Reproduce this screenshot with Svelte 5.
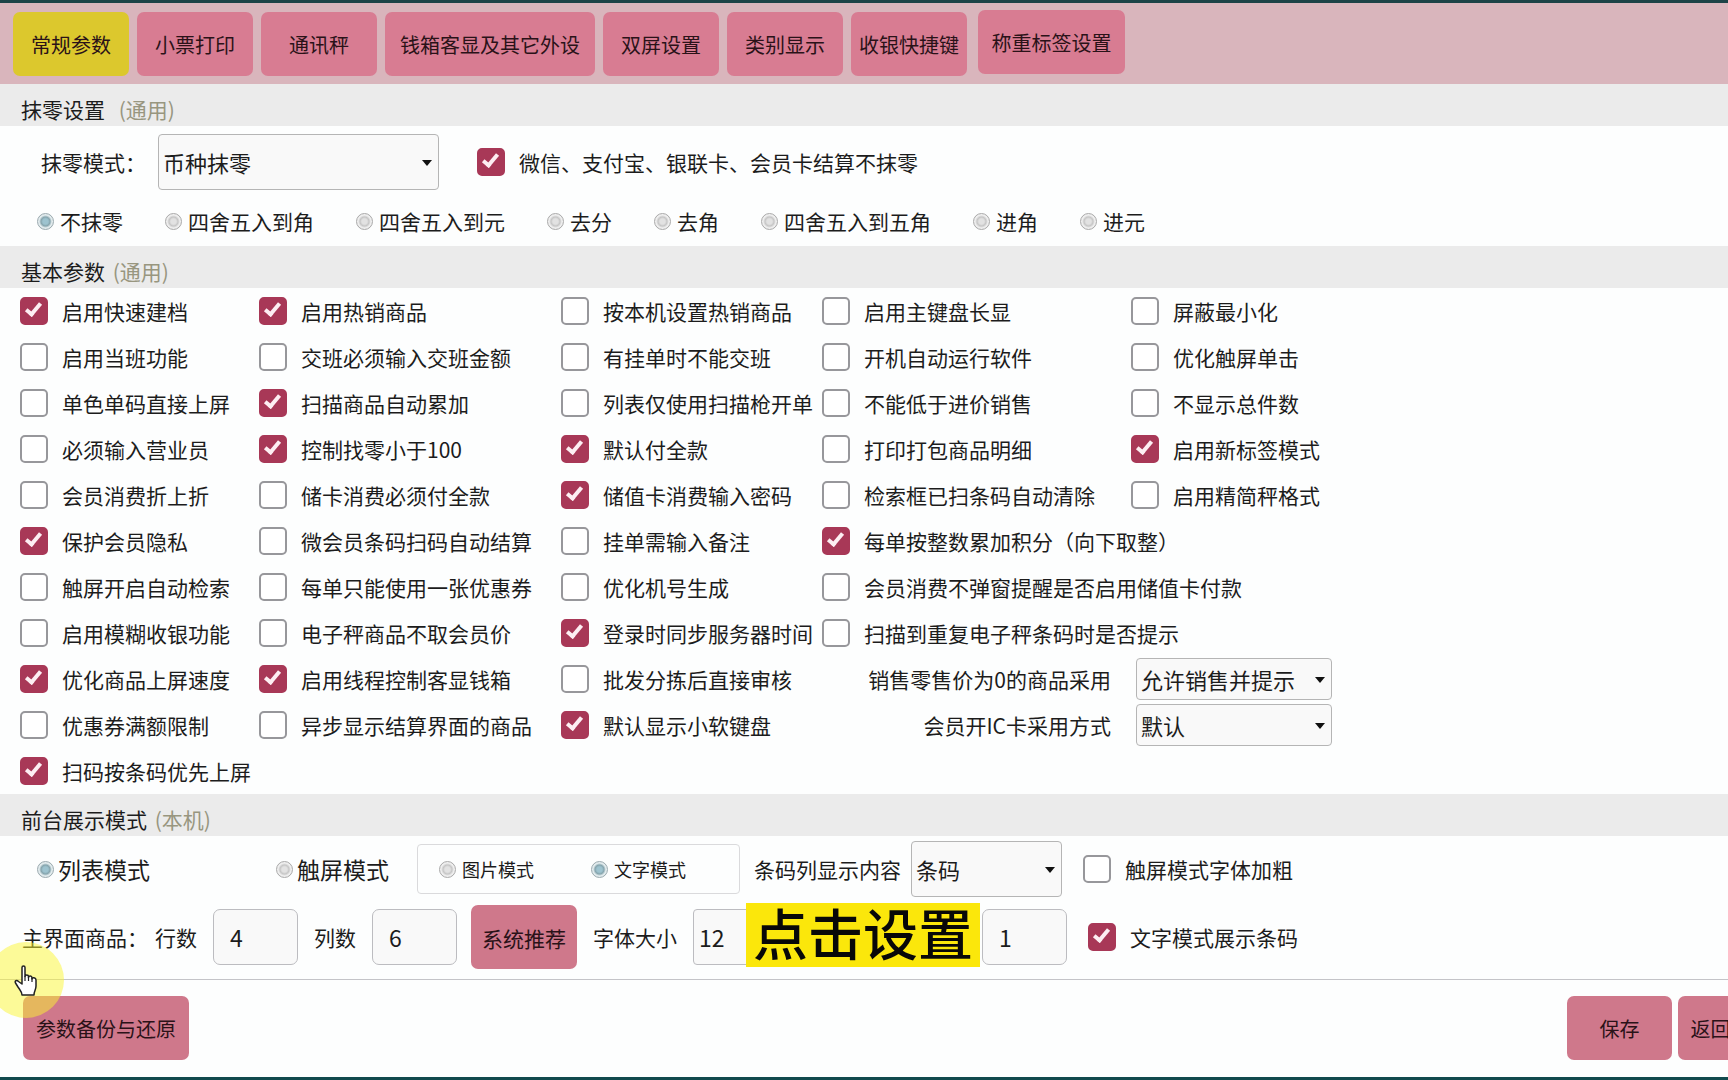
<script lang="ts">
    interface Option {
        label: string;
        on?: boolean;
        wide?: boolean;
    }

    const tabs = ['常规参数', '小票打印', '通讯秤', '钱箱客显及其它外设', '双屏设置', '类别显示', '收银快捷键', '称重标签设置'];
    let activeTab = $state('常规参数');

    const roundingModes = ['不抹零', '四舍五入到角', '四舍五入到元', '去分', '去角', '四舍五入到五角', '进角', '进元'];
    let rounding = $state('不抹零');
    let skipRounding = $state(true);

    // One inner array per line of the grid, wide options run over the last two columns
    const rows: Option[][] = $state([
        [
            { label: '启用快速建档', on: true },
            { label: '启用热销商品', on: true },
            { label: '按本机设置热销商品' },
            { label: '启用主键盘长显' },
            { label: '屏蔽最小化' }
        ],
        [
            { label: '启用当班功能' },
            { label: '交班必须输入交班金额' },
            { label: '有挂单时不能交班' },
            { label: '开机自动运行软件' },
            { label: '优化触屏单击' }
        ],
        [
            { label: '单色单码直接上屏' },
            { label: '扫描商品自动累加', on: true },
            { label: '列表仅使用扫描枪开单' },
            { label: '不能低于进价销售' },
            { label: '不显示总件数' }
        ],
        [
            { label: '必须输入营业员' },
            { label: '控制找零小于100', on: true },
            { label: '默认付全款', on: true },
            { label: '打印打包商品明细' },
            { label: '启用新标签模式', on: true }
        ],
        [
            { label: '会员消费折上折' },
            { label: '储卡消费必须付全款' },
            { label: '储值卡消费输入密码', on: true },
            { label: '检索框已扫条码自动清除' },
            { label: '启用精简秤格式' }
        ],
        [
            { label: '保护会员隐私', on: true },
            { label: '微会员条码扫码自动结算' },
            { label: '挂单需输入备注' },
            { label: '每单按整数累加积分（向下取整）', on: true, wide: true }
        ],
        [
            { label: '触屏开启自动检索' },
            { label: '每单只能使用一张优惠券' },
            { label: '优化机号生成' },
            { label: '会员消费不弹窗提醒是否启用储值卡付款', wide: true }
        ],
        [
            { label: '启用模糊收银功能' },
            { label: '电子秤商品不取会员价' },
            { label: '登录时同步服务器时间', on: true },
            { label: '扫描到重复电子秤条码时是否提示', wide: true }
        ],
        [
            { label: '优化商品上屏速度', on: true },
            { label: '启用线程控制客显钱箱', on: true },
            { label: '批发分拣后直接审核' }
        ],
        [
            { label: '优惠券满额限制' },
            { label: '异步显示结算界面的商品' },
            { label: '默认显示小软键盘', on: true }
        ],
        [{ label: '扫码按条码优先上屏', on: true }]
    ]);

    // Drop-downs that close the lines without a fourth option
    const selects: Record<number, { id: string; label: string; value: string }> = {
        8: { id: 'zero-price', label: '销售零售价为0的商品采用', value: '允许销售并提示' },
        9: { id: 'ic-card', label: '会员开IC卡采用方式', value: '默认' }
    };

    let displayMode = $state('列表模式');
    let touchMode = $state('文字模式');
    let boldTouch = $state(false);
    let showBarcode = $state(true);
    let rowCount = $state('4');
    let colCount = $state('6');
    let fontSize = $state('12');
    let extra = $state('1');
</script>

<div class="window">
    <nav class="tabs">
        {#each tabs as tab}
            <button type="button" class="btn tab" class:active={tab === activeTab} onclick={() => (activeTab = tab)}>{tab}</button>
        {/each}
    </nav>

    <main>
        <section>
            <h2 class="spaced">抹零设置 <span>(通用)</span></h2>
            <div class="line mode-line">
                <label for="mode">抹零模式：</label>
                <div class="select mode-select">
                    <select id="mode"><option>币种抹零</option></select>
                </div>
                <label class="check">
                    <input type="checkbox" bind:checked={skipRounding} />
                    微信、支付宝、银联卡、会员卡结算不抹零
                </label>
            </div>
            <div class="line rounding-line">
                {#each roundingModes as mode}
                    <label class="radio">
                        <input type="radio" name="rounding" value={mode} bind:group={rounding} />
                        {mode}
                    </label>
                {/each}
            </div>
        </section>

        <section>
            <h2>基本参数 <span>(通用)</span></h2>
            {#each rows as row, i}
                <div class="grid-line">
                    {#each row as option}
                        <label class="check" class:wide={option.wide}>
                            <input type="checkbox" bind:checked={option.on} />
                            {option.label}
                        </label>
                    {/each}
                    {#if selects[i]}
                        <label class="select-label" for={selects[i].id}>{selects[i].label}</label>
                        <div class="select grid-select">
                            <select id={selects[i].id}><option>{selects[i].value}</option></select>
                        </div>
                    {/if}
                </div>
            {/each}
        </section>

        <section>
            <h2>前台展示模式 <span>(本机)</span></h2>
            <div class="line display-line">
                <label class="radio large list-mode">
                    <input type="radio" name="display" value="列表模式" bind:group={displayMode} />
                    列表模式
                </label>
                <label class="radio large">
                    <input type="radio" name="display" value="触屏模式" bind:group={displayMode} />
                    触屏模式
                </label>
                <div class="group">
                    <label class="radio small">
                        <input type="radio" name="touch" value="图片模式" bind:group={touchMode} />
                        图片模式
                    </label>
                    <label class="radio small">
                        <input type="radio" name="touch" value="文字模式" bind:group={touchMode} />
                        文字模式
                    </label>
                </div>
                <label for="barcode">条码列显示内容</label>
                <div class="select barcode-select">
                    <select id="barcode"><option>条码</option></select>
                </div>
                <label class="check">
                    <input type="checkbox" bind:checked={boldTouch} />
                    触屏模式字体加粗
                </label>
            </div>
            <div class="line size-line">
                <span class="lead">主界面商品：</span>
                <label for="rows">行数</label>
                <input id="rows" class="field" type="text" bind:value={rowCount} />
                <label for="cols">列数</label>
                <input id="cols" class="field" type="text" bind:value={colCount} />
                <button type="button" class="btn recommend">系统推荐</button>
                <label for="font-size">字体大小</label>
                <div class="captioned">
                    <input id="font-size" class="field tight" type="text" bind:value={fontSize} />
                    <div class="caption">点击设置</div>
                </div>
                <input class="field" type="text" aria-label="数量" bind:value={extra} />
                <label class="check barcode-check">
                    <input type="checkbox" bind:checked={showBarcode} />
                    文字模式展示条码
                </label>
            </div>
        </section>
    </main>

    <footer>
        <button type="button" class="btn backup">参数备份与还原</button>
        <button type="button" class="btn save">保存</button>
        <button type="button" class="btn back">返回</button>
        <div class="pointer">
            <svg width="26" height="32" viewBox="0 0 26 32">
                <path
                    d="M8 2.500c0-2 3-2 3 0v9c0-2 3.500-2 3.500 0v1c0-2 3.500-2 3.500.5v1c0-2 4-1.500 4 1v6c0 4-2 5-2 9H8c0-3-2-5-4-8l-2.500-4c-1-2 1-3.500 3-1.500L8 19z"
                    fill="#fff"
                    stroke="#222"
                    stroke-width="1.500"
                    stroke-linejoin="round"
                />
                <path d="M11 11v5M14.500 12v4M18 13v4" stroke="#222" stroke-width="1.200" />
            </svg>
        </div>
    </footer>
</div>

<style>
    :global(body) {
        margin: 0;
        background: #fdfefe;
    }

    .window {
        box-sizing: border-box;
        display: flex;
        flex-direction: column;
        min-height: 100vh;
        border-top: 3px solid #1d4347;
        border-bottom: 3px solid #114a4d;
        overflow: hidden;
        color: #1c1c1c;
        font-family: "Noto Sans CJK SC", sans-serif;
        font-size: 21px;
        line-height: 28px;
        white-space: nowrap;
    }

    main {
        flex: 1;
        padding-bottom: 7px;
    }

    input,
    select,
    button {
        box-sizing: border-box;
        margin: 0;
        color: inherit;
        font: inherit;
    }

    .btn {
        height: 64px;
        padding: 2px 0 0;
        border: none;
        border-radius: 7px;
        background: #cf788b;
        color: #2a1218;
        font-size: 20px;
        cursor: pointer;
    }

    .tabs {
        display: flex;
        gap: 8px;
        padding: 9px 13px 8px;
        background: #d9b5bc;
    }

    .tab {
        min-width: 116px;
        padding: 2px 8px 0;
        background: #d87c92;
    }

    .tab:nth-child(4) {
        min-width: 210px;
    }

    .tab:last-child {
        min-width: 147px;
        margin: -2px 0 2px 3px;
    }

    .tab.active {
        background: #dcc82d;
    }

    h2 {
        box-sizing: border-box;
        height: 42px;
        margin: 0;
        padding: 11px 21px 3px;
        background: #ebebeb;
        font-size: 21px;
        font-weight: 400;
    }

    h2 span {
        margin-left: 3px;
        color: #98967f;
    }

    h2.spaced span {
        margin-left: 9px;
    }

    .line {
        box-sizing: border-box;
        display: flex;
        align-items: center;
    }

    .check {
        display: flex;
        align-items: center;
        gap: 14px;
    }

    .check input {
        flex: none;
        width: 28px;
        height: 28px;
        appearance: none;
        border: 2px solid #97979b;
        border-radius: 5px;
        background: #fff;
    }

    .check input:checked {
        border-color: #a83857;
        background: #a83857;
    }

    .check input:checked::before {
        content: "";
        display: block;
        width: 5px;
        height: 12px;
        margin: 1px 0 0 7px;
        border: solid #fdeef2;
        border-width: 0 4px 4px 0;
        transform: rotate(40deg);
    }

    .radio {
        display: flex;
        align-items: center;
        gap: 6px;
    }

    .radio input {
        flex: none;
        width: 17px;
        height: 17px;
        appearance: none;
        border: 1px solid #a9a9a9;
        border-radius: 50%;
        background: radial-gradient(circle, #e2e2e2 0 25%, #c6c6c6 42%, #efefef 60%);
    }

    .radio input:checked {
        border-color: #9aa9ae;
        background: radial-gradient(circle, #9dc3cf 0 25%, #86a5ae 42%, #e3ecee 60%);
    }

    .large {
        gap: 4px;
        font-size: 23px;
    }

    .small {
        font-size: 18px;
    }

    .select {
        position: relative;
    }

    .select::after {
        content: "";
        position: absolute;
        top: 50%;
        right: 7px;
        margin-top: -2px;
        border: 5px solid transparent;
        border-top: 6px solid #111;
        border-bottom: none;
        pointer-events: none;
    }

    select {
        width: 100%;
        height: 56px;
        padding: 0 4px;
        appearance: none;
        border: 1px solid #b5b5b5;
        border-radius: 4px;
        background: #f9f9f9;
        font-size: 22px;
    }

    .mode-line {
        height: 72px;
        padding-left: 41px;
    }

    .mode-select {
        width: 281px;
        margin: 0 38px 0 12px;
    }

    .rounding-line {
        height: 48px;
        gap: 42px;
        padding: 0 0 2px 37px;
    }

    .grid-line {
        display: grid;
        grid-template-columns: 239px 302px 261px 309px 1fr;
        align-items: center;
        height: 46px;
        padding-left: 20px;
    }

    .wide {
        grid-column: span 2;
    }

    .select-label {
        justify-self: end;
        margin-right: 20px;
    }

    .grid-select {
        width: 196px;
        margin-left: 5px;
    }

    .grid-select select {
        height: 42px;
    }

    .display-line {
        height: 66px;
        padding-left: 37px;
    }

    .list-mode {
        width: 239px;
    }

    .group {
        box-sizing: border-box;
        display: flex;
        align-items: center;
        gap: 57px;
        width: 323px;
        height: 50px;
        margin: 0 14px 0 28px;
        padding-left: 21px;
        border: 1px solid #dadadc;
        border-radius: 4px;
    }

    .barcode-select {
        width: 151px;
        margin: 0 21px 0 10px;
    }

    .size-line {
        height: 70px;
    }

    .size-line > label {
        margin: 0 16px;
    }

    .size-line > .lead {
        margin: 0 -9px 0 22px;
    }

    .size-line > .barcode-check {
        margin-left: 21px;
    }

    .field {
        width: 85px;
        height: 56px;
        padding: 0 16px;
        border: 1px solid #bcbcc0;
        border-radius: 7px;
        background: #f9f9f9;
        font-size: 23px;
    }

    .tight {
        padding: 0 5px;
        border-radius: 4px;
    }

    .recommend {
        width: 106px;
        margin-left: 14px;
        font-size: 21px;
    }

    .captioned {
        position: relative;
        width: 289px;
    }

    .caption {
        position: absolute;
        top: -6px;
        left: 53px;
        width: 234px;
        height: 64px;
        background: #fbe70b;
        color: #080808;
        font-size: 55px;
        font-weight: 500;
        line-height: 57px;
        text-align: center;
    }

    footer {
        position: relative;
        display: flex;
        gap: 6px;
        padding: 16px 0 17px 23px;
        border-top: 1px solid #c4c4c8;
    }

    .backup {
        width: 166px;
    }

    .save {
        width: 105px;
        margin-left: auto;
    }

    /* runs past the right edge of the window */
    .back {
        width: 105px;
        margin-right: -55px;
        padding-right: 40px;
    }

    .pointer {
        position: absolute;
        top: -38px;
        left: -12px;
        width: 76px;
        height: 76px;
        border-radius: 50%;
        background: rgba(252, 246, 50, 0.5);
        pointer-events: none;
    }

    .pointer svg {
        position: absolute;
        top: 23px;
        left: 26px;
    }
</style>
